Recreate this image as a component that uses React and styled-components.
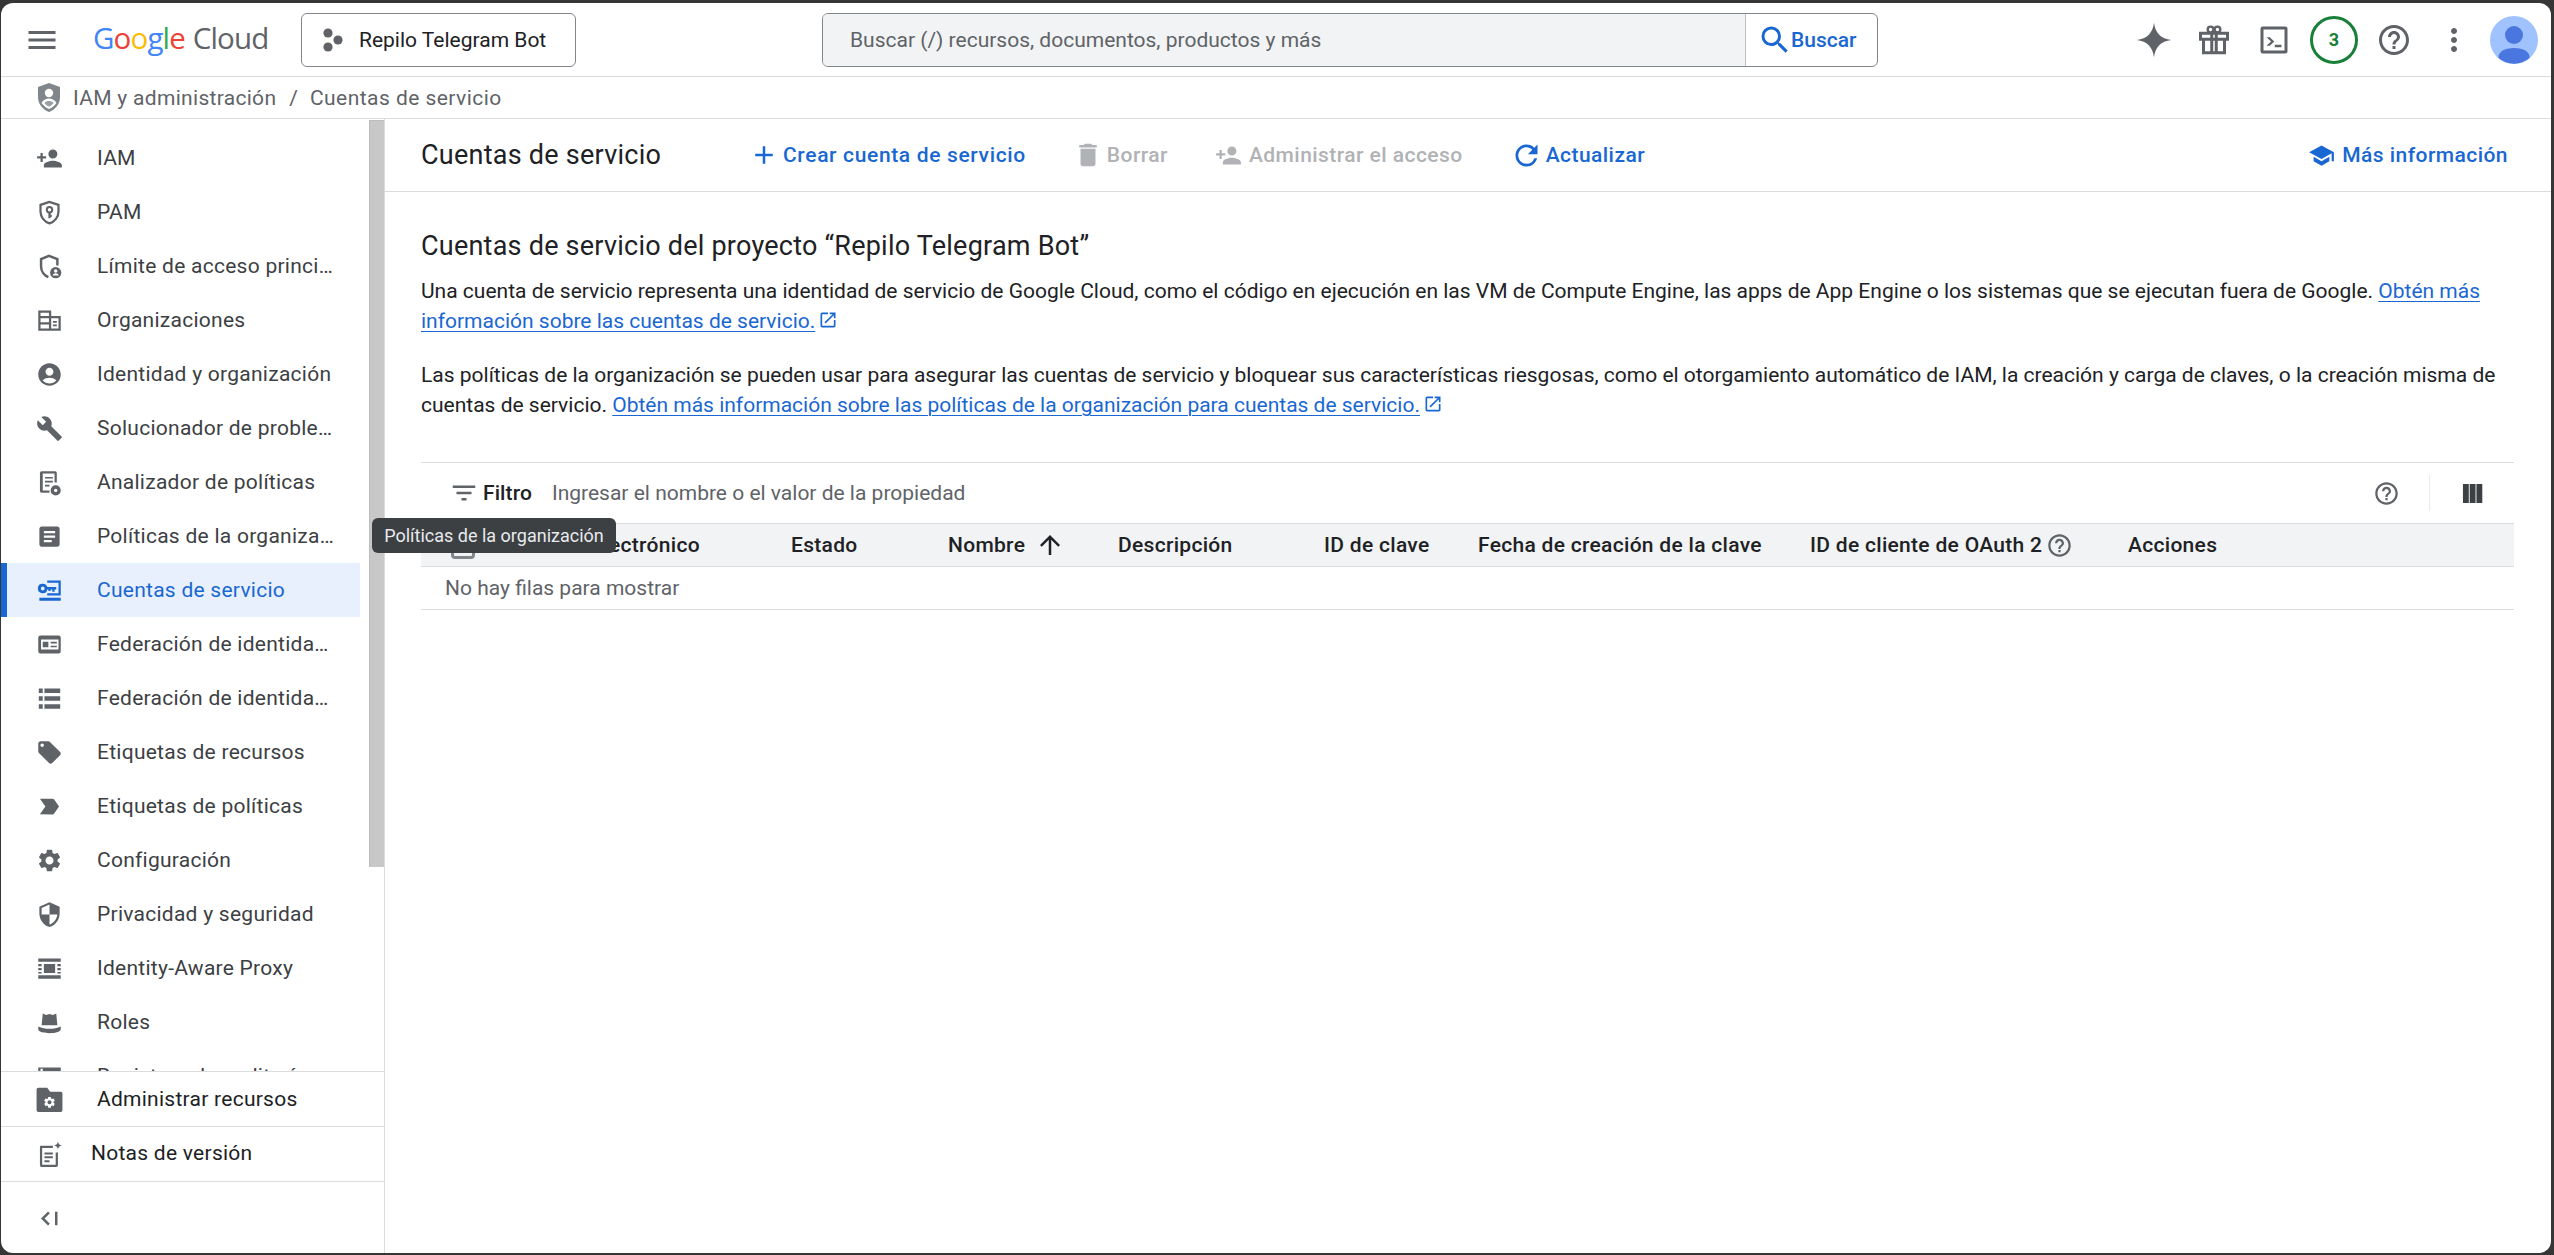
import React from 'react';
import styled, { createGlobalStyle } from 'styled-components';
import {
  MdMenu, MdPersonAdd, MdAccountCircle, MdBuild, MdArticle, MdLocalOffer,
  MdLabelImportant, MdSettings, MdSecurity, MdStorage, MdHelpOutline, MdMoreVert,
  MdAdd, MdDelete, MdRefresh, MdSchool, MdSearch, MdOpenInNew, MdFilterList,
  MdArrowUpward,
} from 'react-icons/md';

const Global = createGlobalStyle`
  html, body { margin: 0; padding: 0; background: #363636; overflow: hidden; }
  * { box-sizing: border-box; }
`;

const Frame = styled.div`
  position: relative;
  width: 2554px;
  height: 1255px;
  background: #363636;
  padding: 3px 3px 2px 1px;
  font-family: Roboto, "Liberation Sans", sans-serif;
  font-size: 21px;
  color: #202124;
`;
const Window = styled.div`
  width: 100%;
  height: 100%;
  background: #fff;
  border-radius: 12px;
  overflow: hidden;
  display: flex;
  flex-direction: column;
`;

/* Top bar */
const TopBar = styled.header`
  height: 74px;
  flex: none;
  display: flex;
  align-items: center;
  padding-left: 23px;
  border-bottom: 1px solid #dadce0;
`;
const Icon = styled.span`
  flex: none;
  display: inline-flex;
  align-items: center;
  justify-content: center;
  width: ${p => p.$size || 27}px;
  height: ${p => p.$h || p.$size || 27}px;
  color: ${p => p.$color || '#5f6368'};
  & > svg { width: 100%; height: 100%; display: block; }
`;
const Logo = styled.div`
  flex: none;
  width: 175px;
  margin-left: 33px;
  font-family: "Open Sans", Roboto, sans-serif;
  font-size: 29.5px;
  letter-spacing: -0.85px;
  word-spacing: 1px;
  white-space: nowrap;
  color: #5f6368;
  line-height: 36px;
  padding-bottom: 3px;
`;
const L = styled.span`
  color: ${p => p.$c};
`;
const ProjectButton = styled.div`
  flex: none;
  width: 275px;
  height: 54px;
  margin-left: 33px;
  display: flex;
  align-items: center;
  gap: 15px;
  padding-left: 18px;
  border: 1.5px solid #80868b;
  border-radius: 6px;
  color: #202124;
`;
const SearchBox = styled.div`
  flex: none;
  width: 1056px;
  height: 54px;
  margin-left: 246px;
  display: flex;
  border: 1.5px solid #80868b;
  border-radius: 6px;
  overflow: hidden;
`;
const SearchField = styled.div`
  flex: 1;
  background: #f1f3f4;
  color: #5f6368;
  display: flex;
  align-items: center;
  padding-left: 27px;
  border-right: 1px solid #bdc1c6;
`;
const SearchButton = styled.div`
  flex: none;
  width: 131px;
  display: flex;
  align-items: center;
  padding-left: 11px;
  color: #1967d2;
  font-weight: 500;
  & > span { margin-right: -2px; }
`;
const TopIcons = styled.div`
  flex: none;
  margin-left: 246px;
  display: flex;
`;
const TopSlot = styled.div`
  width: 60px;
  height: 60px;
  display: flex;
  align-items: center;
  justify-content: center;
`;
const Badge = styled.div`
  width: 48px;
  height: 48px;
  border-radius: 50%;
  border: 3px solid #188038;
  color: #188038;
  font-size: 18px;
  font-weight: 700;
  display: flex;
  align-items: center;
  justify-content: center;
`;

/* Breadcrumb */
const Crumbs = styled.nav`
  height: 42px;
  flex: none;
  display: flex;
  align-items: center;
  padding-left: 36px;
  color: #5f6368;
  border-bottom: 1px solid #dadce0;
`;
const CrumbText = styled.span`
  margin-left: ${p => p.$ml || 0}px;
  letter-spacing: ${p => p.$ls || 0}px;
`;

/* Body */
const Body = styled.div`
  flex: 1;
  min-height: 0;
  display: flex;
`;
const Side = styled.aside`
  flex: none;
  width: 384px;
  border-right: 1px solid #dadce0;
  display: flex;
  flex-direction: column;
`;
const NavScroll = styled.div`
  position: relative;
  flex: 1;
  min-height: 0;
  overflow: hidden;
  padding-top: 12px;
`;
const Thumb = styled.div`
  position: absolute;
  top: 1px;
  right: 0;
  width: 15px;
  height: 747px;
  background: #c8c8c8;
  border-left: 1px solid #bdbdbd;
  border-top: 1px solid #bdbdbd;
`;
const NavItem = styled.div`
  width: 359px;
  height: 54px;
  flex: none;
  display: flex;
  align-items: center;
  padding-left: 35px;
  letter-spacing: 0.26px;
  background: ${p => (p.$active ? '#e8f0fe' : 'transparent')};
  box-shadow: ${p => (p.$active ? 'inset 6px 0 0 #1967d2' : 'none')};
  color: ${p => (p.$active ? '#1967d2' : '#3c4043')};
`;
const NavLabel = styled.span`
  margin-left: 34px;
  width: 238px;
  white-space: nowrap;
  overflow: hidden;
  text-overflow: ellipsis;
`;
const FootRow = styled.div`
  flex: none;
  height: 55px;
  display: flex;
  align-items: center;
  padding-left: 35px;
  padding-bottom: ${p => p.$pb || 0}px;
  border-top: 1px solid #dadce0;
  letter-spacing: 0.26px;
  color: #202124;
`;
const FootLabel = styled.span`
  margin-left: ${p => p.$ml}px;
`;
const Collapse = styled.div`
  flex: none;
  height: 72px;
  display: flex;
  align-items: center;
  padding: 2px 0 0 35px;
  border-top: 1px solid #dadce0;
`;

/* Main */
const Main = styled.main`
  flex: 1;
  min-width: 0;
  display: flex;
  flex-direction: column;
`;
const Toolbar = styled.div`
  flex: none;
  height: 73px;
  display: flex;
  align-items: center;
  padding: 0 43px 0 36px;
  border-bottom: 1px solid #dadce0;
`;
const Title = styled.h1`
  margin: 0;
  width: 328px;
  flex: none;
  font-size: 27px;
  letter-spacing: 0.25px;
  font-weight: 400;
  color: #202124;
`;
const Actions = styled.div`
  display: flex;
  align-items: center;
  gap: 47px;
`;
const Action = styled.div`
  display: flex;
  align-items: center;
  gap: ${p => p.$gap ?? 4}px;
  font-weight: 500;
  letter-spacing: ${p => p.$ls ?? 0.45}px;
  color: ${p => (p.$off ? '#b0b2b5' : '#1967d2')};
  white-space: nowrap;
`;
const More = styled(Action)`
  margin-left: auto;
`;
const Content = styled.div`
  padding: 36px 37px 0 36px;
`;
const Heading = styled.h2`
  margin: 0 0 12px;
  font-size: 27px;
  letter-spacing: 0.23px;
  line-height: 36px;
  font-weight: 400;
  color: #202124;
`;
const Para = styled.p`
  margin: 0 0 24px;
  line-height: 30px;
  font-size: 21px;
  color: #202124;
`;
const Link = styled.a`
  color: #1967d2;
  text-decoration: underline;
  text-underline-offset: 3px;
  text-decoration-thickness: 1px;
`;
const Ext = styled.span`
  display: inline-flex;
  vertical-align: -2px;
  margin-left: 3px;
  color: #1967d2;
  & > svg { width: 20px; height: 20px; }
`;
const FilterRow = styled.div`
  margin-top: 42px;
  height: 61px;
  display: flex;
  align-items: center;
  padding: 0 28px;
  border-top: 1px solid #dadce0;
`;
const FilterLabel = styled.span`
  margin-left: 4px;
  font-weight: 500;
  letter-spacing: 0.1px;
  color: #202124;
`;
const FilterHint = styled.span`
  margin-left: 20px;
  color: #5f6368;
`;
const FilterTools = styled.div`
  margin-left: auto;
  display: flex;
  align-items: center;
  gap: 29px;
`;
const VLine = styled.div`
  width: 1px;
  height: 36px;
  background: #e8eaed;
`;
const HeadRow = styled.div`
  height: 44px;
  display: grid;
  grid-template-columns: 100px 270px 157px 170px 206px 154px 332px 318px 1fr;
  align-items: center;
  background: #f1f3f4;
  border-top: 1px solid #dadce0;
  border-bottom: 1px solid #dadce0;
  font-weight: 500;
  font-size: 21px;
  letter-spacing: 0.3px;
  color: #202124;
`;
const HeadCell = styled.div`
  display: flex;
  align-items: center;
  gap: ${p => p.$gap || 0}px;
  white-space: nowrap;
`;
const Check = styled.div`
  width: 24px;
  height: 26px;
  margin: 2px 0 0 30px;
  border: 3px solid #80868b;
  border-radius: 4px;
`;
const EmptyRow = styled.div`
  height: 43px;
  display: flex;
  align-items: center;
  padding-left: 24px;
  color: #5f6368;
  border-bottom: 1px solid #dadce0;
`;
const Tooltip = styled.div`
  position: absolute;
  left: 372px;
  top: 518px;
  width: 244px;
  height: 35px;
  display: flex;
  align-items: center;
  justify-content: center;
  background: #3c4043;
  color: #e8eaed;
  border-radius: 6px;
  font-size: 18px;
  white-space: nowrap;
`;

/* Hand-drawn glyphs */
const Sparkle = () => (
  <svg viewBox="0 0 24 24" fill="#5f6368"><path d="M12 0.5C12.8 7.2 16.6 11.2 23.5 12 16.6 12.8 12.8 16.8 12 23.5 11.2 16.8 7.4 12.8 0.5 12 7.4 11.2 11.2 7.2 12 0.5Z" /></svg>
);
const Gift = () => (
  <svg viewBox="0 0 24 24" fill="none" stroke="#5f6368" strokeWidth="2">
    <rect x="3" y="7.5" width="18" height="4" />
    <path d="M5 11.5V20.5H19V11.5M10.5 7.5V20.5M13.5 7.5V20.5" />
    <circle cx="9.7" cy="5" r="1.9" strokeWidth="1.6" />
    <circle cx="14.3" cy="5" r="1.9" strokeWidth="1.6" />
  </svg>
);
const Terminal = () => (
  <svg viewBox="0 0 24 24" fill="#5f6368">
    <path fillRule="evenodd" d="M4.5 3h15A1.5 1.5 0 0 1 21 4.5v15a1.5 1.5 0 0 1-1.5 1.5h-15A1.5 1.5 0 0 1 3 19.5v-15A1.5 1.5 0 0 1 4.5 3zM5 5v14h14V5z" />
    <path d="M7 10.2h2.2l3 2.8-3 2.8H7l3-2.8zM12.5 15.2h4.5v1.6h-4.5z" />
  </svg>
);
const Avatar = () => (
  <svg viewBox="0 0 48 48" width="48" height="48">
    <circle cx="24" cy="24" r="24" fill="#a0c3ff" />
    <circle cx="24" cy="19" r="9" fill="#4a76e0" />
    <path d="M8.5 42C8 36 14 32 24 32s16 4 15.5 10A24 24 0 0 1 8.5 42Z" fill="#4a76e0" />
  </svg>
);
const ProjectDots = () => (
  <svg viewBox="0 0 24 24" fill="#5f6368">
    <circle cx="8" cy="5" r="4.6" /><circle cx="8" cy="19" r="4.6" /><circle cx="18" cy="12" r="4.6" />
  </svg>
);
const IamShield = () => (
  <svg viewBox="0 0 24 29">
    <path d="M12 0L1 4v10c0 7 4.7 12.6 11 15 6.3-2.4 11-8 11-15V4z" fill="#80868b" />
    <circle cx="12" cy="10" r="4.2" fill="#fff" />
    <path d="M4.5 20c1.5-3 4.5-4.5 7.5-4.5s6 1.5 7.5 4.5c-1.6 2.5-4.5 5-7.5 6-3-1-5.9-3.5-7.5-6z" fill="#fff" />
    <path d="M7.5 20c1-1.4 2.8-2 4.5-2s3.5.6 4.5 2c-1 1.5-2.8 3-4.5 3.5-1.7-.5-3.5-2-4.5-3.5z" fill="#9aa0a6" />
  </svg>
);
const Pam = () => (
  <svg viewBox="0 0 24 24" fill="none" stroke="currentColor">
    <path strokeWidth="2" d="M12 2.5L4 5.2V11c0 5 3.3 9.3 8 10.7 4.7-1.4 8-5.7 8-10.7V5.2z" />
    <circle cx="12" cy="9.5" r="2.4" strokeWidth="1.8" />
    <path strokeWidth="2" d="M12 12v5M12 15h2" />
  </svg>
);
const Boundary = () => (
  <svg viewBox="0 0 24 24" fill="currentColor">
    <path fill="none" stroke="currentColor" strokeWidth="2.2" d="M19 11V5.5L11.5 2.5 4.5 5.5V12c0 4.2 2.8 8 6.5 9.5" />
    <circle cx="17.5" cy="17.5" r="5" />
    <circle cx="17.5" cy="16" r="1.5" fill="#fff" />
    <path d="M14.7 20c.5-1.3 1.7-1.9 2.8-1.9s2.3.6 2.8 1.9z" fill="#fff" />
  </svg>
);
const Org = () => (
  <svg viewBox="0 0 24 24" fill="currentColor">
    <path fillRule="evenodd" d="M2 3h11.5v5H22v13H2zM4 5v3h7.5V5zM4 10v3.5h7.5V10zM4 15.5V19h7.5v-3.5zM13.5 10v9H20v-9z" />
    <path d="M15 12.5h3.5V14H15zM15 15.5h3.5V17H15z" />
  </svg>
);
const Analyzer = () => (
  <svg viewBox="0 0 24 24" fill="currentColor">
    <path fillRule="evenodd" d="M5 2h12a1.5 1.5 0 0 1 1.5 1.5V12h-2V4H6v15h6v2H5a1.5 1.5 0 0 1-1.5-1.5v-16A1.5 1.5 0 0 1 5 2z" />
    <path d="M8 7h7v1.500H8zM8 10.500h7V12H8zM8 14h4v1.500H8z" />
    <path fillRule="evenodd" d="M17.5 14.5a4.5 4.5 0 1 1 0 9 4.5 4.5 0 0 1 0-9zm0 3a1.5 1.5 0 1 0 0 3 1.5 1.5 0 0 0 0-3z" />
  </svg>
);
const ServiceKey = () => (
  <svg viewBox="0 0 24 24" fill="currentColor">
    <path fillRule="evenodd" d="M6 6a4.2 4.2 0 0 1 4 2.8h8V11h-1.5v2h-2v-2H13v1.5h-2V11h-1a4.2 4.2 0 1 1-4-5zm0 2.5a1.7 1.7 0 1 0 0 3.4 1.7 1.7 0 0 0 0-3.4z" />
    <path d="M10 3h12v13.5H10v-2h10V5H10zM3 18.5h19V21H3z" />
  </svg>
);
const IdCard = () => (
  <svg viewBox="0 0 24 24" fill="currentColor">
    <path fillRule="evenodd" d="M4 4h16a2 2 0 0 1 2 2v12a2 2 0 0 1-2 2H4a2 2 0 0 1-2-2V6a2 2 0 0 1 2-2zM4.5 7.5v9H20v-9z" />
    <path d="M6 9.5h5v5H6zM13 9.5h5.5V11H13zM13 13h5.500v1.500H13z" />
  </svg>
);
const Rows = () => (
  <svg viewBox="0 0 24 24" fill="currentColor">
    <path d="M2.5 3h3.500v4H2.500zM7.500 3h14v4h-14zM2.500 10h3.500v4H2.500zM7.500 10h14v4h-14zM2.500 17h3.500v4H2.500zM7.500 17h14v4h-14z" />
  </svg>
);
const Columns = () => (
  <svg viewBox="0 0 24 24" fill="currentColor">
    <path d="M3.500 3.500h5.200v17H3.500zM9.500 3.500h5.200v17H9.500zM15.500 3.500h5.200v17h-5.200z" />
  </svg>
);
const Iap = () => (
  <svg viewBox="0 0 24 24" fill="currentColor">
    <path d="M2 3h20v3H2zM2 18h20v3H2zM7 8h10v8H7zM2 8h3v2H2zM2 11.500h3v2H2zM2 15h3v1.500H2zM19 8h3v2h-3zM19 11.500h3v2h-3zM19 15h3v1.500h-3z" />
  </svg>
);
const Hat = () => (
  <svg viewBox="0 0 24 24" fill="currentColor">
    <path d="M6 4l3 1.300L12 4.500l3 .8L18 4l1 10.500H5z" />
    <path d="M2 15.500c3 1.500 6.500 2 10 2s7-.5 10-2V18c0 2-4 3.500-10 3.500S2 20 2 18z" />
  </svg>
);
const FolderGear = () => (
  <svg viewBox="0 0 24 24" fill="currentColor">
    <path d="M2 1.500h8l2.500 3.500H22a1.500 1.500 0 0 1 1.500 1.500v15A1.500 1.500 0 0 1 22 23H2a1.500 1.500 0 0 1-1.500-1.500V3A1.500 1.500 0 0 1 2 1.500z" />
    <MdSettings x="6" y="8.500" size="12" color="#fff" />
  </svg>
);
const Notes = () => (
  <svg viewBox="0 0 24 24" fill="currentColor">
    <path fillRule="evenodd" d="M4 5h11v2H5.500v15h12V11h2v11.500a1.500 1.500 0 0 1-1.500 1.500H5a1.500 1.500 0 0 1-1.500-1.500V6.500A1.500 1.500 0 0 1 4 5z" />
    <path d="M7.500 11H15v1.800H7.500zM7.500 14.500H15v1.800H7.500zM7.500 18H12v1.800H7.500z" />
    <path d="M19.500 1c.3 2.500 1.300 3.500 3.500 3.800-2.200.3-3.200 1.300-3.500 3.700-.3-2.400-1.300-3.400-3.500-3.700 2.200-.3 3.200-1.300 3.500-3.800z" />
  </svg>
);
const CollapseGlyph = () => (
  <svg viewBox="0 0 24 24" fill="none" stroke="#5f6368" strokeWidth="2.2">
    <path d="M11.500 6.500L6 12l5.500 5.500M18 6v12" />
  </svg>
);

const navItems = [
  ['IAM', MdPersonAdd],
  ['PAM', Pam],
  ['Límite de acceso principal', Boundary],
  ['Organizaciones', Org],
  ['Identidad y organización', MdAccountCircle],
  ['Solucionador de problemas', MdBuild],
  ['Analizador de políticas', Analyzer],
  ['Políticas de la organización', MdArticle],
  ['Cuentas de servicio', ServiceKey, true],
  ['Federación de identidad para cargas', IdCard],
  ['Federación de identidad de personal', Rows],
  ['Etiquetas de recursos', MdLocalOffer],
  ['Etiquetas de políticas', MdLabelImportant],
  ['Configuración', MdSettings],
  ['Privacidad y seguridad', MdSecurity],
  ['Identity-Aware Proxy', Iap],
  ['Roles', Hat],
  ['Registros de auditoría', MdStorage],
];

const heads = [
  ['Estado'],
  ['Nombre', <Icon key="a" $size={30} $color="#202124"><MdArrowUpward /></Icon>, 10],
  ['Descripción'],
  ['ID de clave'],
  ['Fecha de creación de la clave'],
  ['ID de cliente de OAuth 2', <Icon key="h" $size={27}><MdHelpOutline /></Icon>, 4],
  ['Acciones'],
];

export default function App() {
  return (
    <Frame>
      <Global />
      <Window>
        <TopBar>
          <Icon $size={36}><MdMenu /></Icon>
          <Logo>
            <L $c="#4285f4">G</L><L $c="#ea4335">o</L><L $c="#fbbc05">o</L><L $c="#4285f4">g</L><L $c="#34a853">l</L><L $c="#ea4335">e</L> Cloud
          </Logo>
          <ProjectButton>
            <Icon $size={24}><ProjectDots /></Icon>
            Repilo Telegram Bot
          </ProjectButton>
          <SearchBox>
            <SearchField>Buscar (/) recursos, documentos, productos y más</SearchField>
            <SearchButton>
              <Icon $size={36} $color="#1967d2"><MdSearch /></Icon>
              Buscar
            </SearchButton>
          </SearchBox>
          <TopIcons>
            <TopSlot><Icon $size={36}><Sparkle /></Icon></TopSlot>
            <TopSlot><Icon $size={36}><Gift /></Icon></TopSlot>
            <TopSlot><Icon $size={36}><Terminal /></Icon></TopSlot>
            <TopSlot><Badge>3</Badge></TopSlot>
            <TopSlot><Icon $size={36}><MdHelpOutline /></Icon></TopSlot>
            <TopSlot><Icon $size={36}><MdMoreVert /></Icon></TopSlot>
            <TopSlot><Avatar /></TopSlot>
          </TopIcons>
        </TopBar>
        <Crumbs>
          <Icon $size={24} $h={29}><IamShield /></Icon>
          <CrumbText $ml={12} $ls={0.3}>IAM y administración</CrumbText>
          <CrumbText $ml={13}>/</CrumbText>
          <CrumbText $ml={12} $ls={0.45}>Cuentas de servicio</CrumbText>
        </Crumbs>
        <Body>
          <Side>
            <NavScroll>
              {navItems.map(([label, Glyph, active]) => (
                <NavItem key={label} $active={active}>
                  <Icon $color={active ? '#1967d2' : '#5f6368'}><Glyph /></Icon>
                  <NavLabel>{label}</NavLabel>
                </NavItem>
              ))}
              <Thumb />
            </NavScroll>
            <FootRow>
              <Icon><FolderGear /></Icon>
              <FootLabel $ml={34}>Administrar recursos</FootLabel>
            </FootRow>
            <FootRow $pb={2}>
              <Icon><Notes /></Icon>
              <FootLabel $ml={28}>Notas de versión</FootLabel>
            </FootRow>
            <Collapse><Icon><CollapseGlyph /></Icon></Collapse>
          </Side>
          <Main>
            <Toolbar>
              <Title>Cuentas de servicio</Title>
              <Actions>
                <Action $ls={0.65}><Icon $size={30} $color="#1967d2"><MdAdd /></Icon>Crear cuenta de servicio</Action>
                <Action $off><Icon $size={30} $color="#b0b2b5"><MdDelete /></Icon>Borrar</Action>
                <Action $off $gap={7}><Icon $size={27} $color="#b0b2b5"><MdPersonAdd /></Icon>Administrar el acceso</Action>
                <Action $gap={3}><Icon $size={33} $color="#1967d2"><MdRefresh /></Icon>Actualizar</Action>
              </Actions>
              <More $gap={7}><Icon $size={27} $color="#1967d2"><MdSchool /></Icon>Más información</More>
            </Toolbar>
            <Content>
              <Heading>Cuentas de servicio del proyecto “Repilo Telegram Bot”</Heading>
              <Para>
                Una cuenta de servicio representa una identidad de servicio de Google Cloud, como el código en ejecución en las VM de Compute Engine, las apps de App Engine o los sistemas que se ejecutan fuera de Google. <Link>Obtén más información sobre las cuentas de servicio.</Link><Ext><MdOpenInNew /></Ext>
              </Para>
              <Para>
                Las políticas de la organización se pueden usar para asegurar las cuentas de servicio y bloquear sus características riesgosas, como el otorgamiento automático de IAM, la creación y carga de claves, o la creación misma de cuentas de servicio. <Link>Obtén más información sobre las políticas de la organización para cuentas de servicio.</Link><Ext><MdOpenInNew /></Ext>
              </Para>
              <FilterRow>
                <Icon $size={30}><MdFilterList /></Icon>
                <FilterLabel>Filtro</FilterLabel>
                <FilterHint>Ingresar el nombre o el valor de la propiedad</FilterHint>
                <FilterTools>
                  <Icon><MdHelpOutline /></Icon>
                  <VLine />
                  <Icon $color="#3c4043"><Columns /></Icon>
                </FilterTools>
              </FilterRow>
              <HeadRow>
                <div><Check /></div>
                <HeadCell>Correo electrónico</HeadCell>
                {heads.map(([label, extra, gap]) => (
                  <HeadCell key={label} $gap={gap}>{label}{extra}</HeadCell>
                ))}
              </HeadRow>
              <EmptyRow>No hay filas para mostrar</EmptyRow>
            </Content>
          </Main>
        </Body>
      </Window>
      <Tooltip>Políticas de la organización</Tooltip>
    </Frame>
  );
}
